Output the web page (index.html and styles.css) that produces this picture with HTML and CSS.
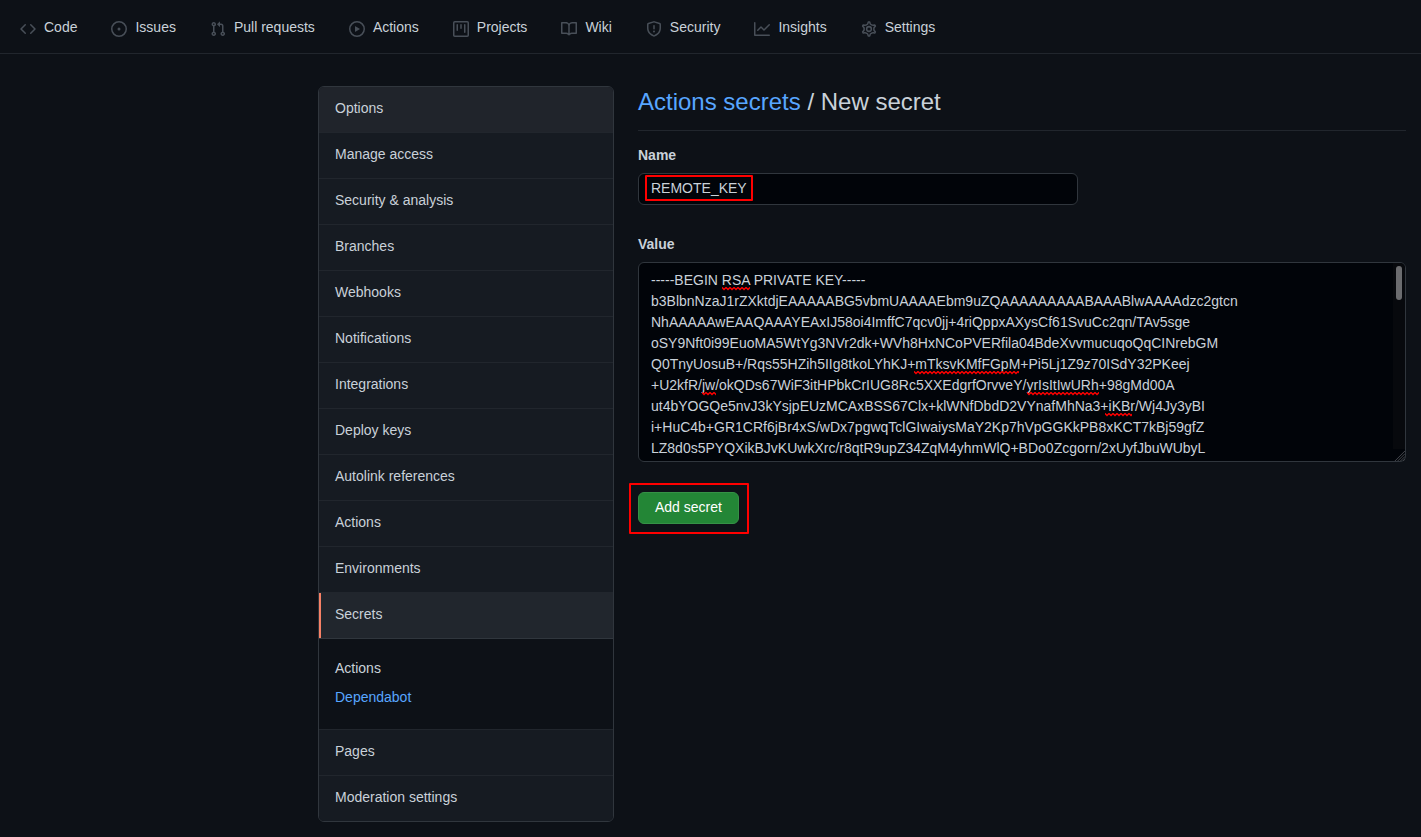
FILE: index.html
```html
<!DOCTYPE html>
<html lang="en">
<head>
<meta charset="utf-8">
<title>New secret</title>
<link rel="stylesheet" href="styles.css">
</head>
<body>
<header class="repo-header">
  <nav class="repo-nav" aria-label="Repository">
    <a class="repo-tab" href="#"><svg class="icon" viewBox="0 0 16 16" aria-hidden="true"><path fill-rule="evenodd" d="M4.72 3.22a.75.75 0 011.06 1.06L2.06 8l3.72 3.72a.75.75 0 11-1.06 1.06L.47 8.53a.75.75 0 010-1.06l4.25-4.25zm6.56 0a.75.75 0 10-1.06 1.06L13.94 8l-3.72 3.72a.75.75 0 101.06 1.06l4.25-4.25a.75.75 0 000-1.06l-4.25-4.25z"/></svg><span>Code</span></a>
    <a class="repo-tab" href="#"><svg class="icon" viewBox="0 0 16 16" aria-hidden="true"><path d="M8 9.5a1.5 1.5 0 100-3 1.5 1.5 0 000 3z"/><path fill-rule="evenodd" d="M8 0a8 8 0 100 16A8 8 0 008 0zM1.5 8a6.5 6.5 0 1113 0 6.5 6.5 0 01-13 0z"/></svg><span>Issues</span></a>
    <a class="repo-tab" href="#"><svg class="icon" viewBox="0 0 16 16" aria-hidden="true"><path fill-rule="evenodd" d="M7.177 3.073L9.573.677A.25.25 0 0110 .854v4.792a.25.25 0 01-.427.177L7.177 3.427a.25.25 0 010-.354zM3.75 2.5a.75.75 0 100 1.5.75.75 0 000-1.5zm-2.25.75a2.25 2.25 0 113 2.122v5.256a2.251 2.251 0 11-1.5 0V5.372A2.25 2.25 0 011.5 3.25zM11 2.5h-1V4h1a1 1 0 011 1v5.628a2.251 2.251 0 101.5 0V5A2.5 2.5 0 0011 2.5zm1 10.25a.75.75 0 111.5 0 .75.75 0 01-1.5 0zM3.75 12a.75.75 0 100 1.5.75.75 0 000-1.5z"/></svg><span>Pull requests</span></a>
    <a class="repo-tab" href="#"><svg class="icon" viewBox="0 0 16 16" aria-hidden="true"><path fill-rule="evenodd" d="M1.5 8a6.5 6.5 0 1113 0 6.5 6.5 0 01-13 0zM8 0a8 8 0 100 16A8 8 0 008 0zM6.379 5.227A.25.25 0 006 5.442v5.117a.25.25 0 00.379.214l4.264-2.559a.25.25 0 000-.428L6.379 5.227z"/></svg><span>Actions</span></a>
    <a class="repo-tab" href="#"><svg class="icon" viewBox="0 0 16 16" aria-hidden="true"><path fill-rule="evenodd" d="M1.75 0A1.75 1.75 0 000 1.75v12.5C0 15.216.784 16 1.75 16h12.5A1.75 1.75 0 0016 14.25V1.75A1.75 1.75 0 0014.25 0H1.75zM1.5 1.75a.25.25 0 01.25-.25h12.5a.25.25 0 01.25.25v12.5a.25.25 0 01-.25.25H1.75a.25.25 0 01-.25-.25V1.75zM11.75 3a.75.75 0 00-.75.75v7.5a.75.75 0 001.5 0v-7.5a.75.75 0 00-.75-.75zm-8.25.75a.75.75 0 011.5 0v5.5a.75.75 0 01-1.5 0v-5.5zM8 3a.75.75 0 00-.75.75v3.5a.75.75 0 001.5 0v-3.5A.75.75 0 008 3z"/></svg><span>Projects</span></a>
    <a class="repo-tab" href="#"><svg class="icon" viewBox="0 0 16 16" aria-hidden="true"><path fill-rule="evenodd" d="M0 1.75A.75.75 0 01.75 1h4.253c1.227 0 2.317.59 3 1.501A3.744 3.744 0 0111.006 1h4.245a.75.75 0 01.75.75v10.5a.75.75 0 01-.75.75h-4.507a2.25 2.25 0 00-1.591.659l-.622.621a.75.75 0 01-1.06 0l-.622-.621A2.25 2.25 0 005.258 13H.75a.75.75 0 01-.75-.75V1.75zm8.755 3a2.25 2.25 0 012.25-2.25H14.5v9h-3.757c-.71 0-1.4.201-1.992.572l.004-7.322zm-1.504 7.324l.004-5.073-.002-2.253A2.25 2.25 0 005.003 2.5H1.5v9h3.757a3.75 3.75 0 011.994.574z"/></svg><span>Wiki</span></a>
    <a class="repo-tab" href="#"><svg class="icon" viewBox="0 0 16 16" aria-hidden="true"><path fill-rule="evenodd" d="M7.467.133a1.75 1.75 0 011.066 0l5.25 1.68A1.75 1.75 0 0115 3.48V7c0 1.566-.32 3.182-1.303 4.682-.983 1.498-2.585 2.813-5.032 3.855a1.7 1.7 0 01-1.33 0c-2.447-1.042-4.049-2.357-5.032-3.855C1.32 10.182 1 8.566 1 7V3.48a1.75 1.75 0 011.217-1.667l5.25-1.68zm.61 1.429a.25.25 0 00-.153 0l-5.25 1.68a.25.25 0 00-.174.238V7c0 1.358.275 2.666 1.057 3.86.784 1.194 2.121 2.34 4.366 3.297a.2.2 0 00.154 0c2.245-.956 3.582-2.104 4.366-3.298C13.225 9.666 13.5 8.36 13.5 7V3.48a.25.25 0 00-.174-.237l-5.25-1.68zM9 10.5a1 1 0 11-2 0 1 1 0 012 0zm-.25-5.75a.75.75 0 10-1.5 0v3a.75.75 0 001.5 0v-3z"/></svg><span>Security</span></a>
    <a class="repo-tab" href="#"><svg class="icon" viewBox="0 0 16 16" aria-hidden="true"><path fill-rule="evenodd" d="M1.5 1.75a.75.75 0 00-1.5 0v12.5c0 .414.336.75.75.75h14.5a.75.75 0 000-1.5H1.5V1.75zm14.28 2.53a.75.75 0 00-1.06-1.06L10 7.94 7.53 5.47a.75.75 0 00-1.06 0L3.22 8.72a.75.75 0 001.06 1.06L7 7.06l2.47 2.47a.75.75 0 001.06 0l5.25-5.25z"/></svg><span>Insights</span></a>
    <a class="repo-tab" href="#"><svg class="icon icon-stroked" viewBox="0.6 0.6 14.8 14.8" aria-hidden="true"><path d="M7.429 1.525a6.593 6.593 0 011.142 0c.036.003.108.036.137.146l.289 1.105c.147.56.55.967.997 1.189.174.086.341.183.501.29.417.278.97.423 1.53.27l1.102-.303c.11-.03.175.016.195.046.219.31.41.641.573.989.014.031.022.11-.059.19l-.815.806c-.411.406-.562.957-.53 1.456a4.588 4.588 0 010 .582c-.032.499.119 1.05.53 1.456l.815.806c.08.08.073.159.059.19a6.494 6.494 0 01-.573.99c-.02.029-.086.074-.195.045l-1.103-.303c-.559-.153-1.112-.008-1.529.27-.16.107-.327.204-.5.29-.449.222-.851.628-.998 1.189l-.289 1.105c-.029.11-.101.143-.137.146a6.613 6.613 0 01-1.142 0c-.036-.003-.108-.037-.137-.146l-.289-1.105c-.147-.56-.55-.967-.997-1.189a4.502 4.502 0 01-.501-.29c-.417-.278-.97-.423-1.53-.27l-1.102.303c-.11.03-.175-.016-.195-.046a6.492 6.492 0 01-.573-.989c-.014-.031-.022-.11.059-.19l.815-.806c.411-.406.562-.957.53-1.456a4.587 4.587 0 010-.582c.032-.499-.119-1.05-.53-1.456l-.815-.806c-.08-.08-.073-.159-.059-.19a6.44 6.44 0 01.573-.99c.02-.029.086-.075.195-.045l1.103.303c.559.153 1.112.008 1.529-.27.16-.107.327-.204.5-.29.449-.222.851-.628.998-1.189l.289-1.105c.029-.11.101-.143.137-.146z"/><circle cx="8" cy="8" r="2.2"/></svg><span>Settings</span></a>
  </nav>
</header>

<div class="layout">
  <nav class="side-menu" aria-label="Settings">
    <a class="side-item is-hovered" href="#">Options</a>
    <a class="side-item" href="#">Manage access</a>
    <a class="side-item" href="#">Security &amp; analysis</a>
    <a class="side-item" href="#">Branches</a>
    <a class="side-item" href="#">Webhooks</a>
    <a class="side-item" href="#">Notifications</a>
    <a class="side-item" href="#">Integrations</a>
    <a class="side-item" href="#">Deploy keys</a>
    <a class="side-item" href="#">Autolink references</a>
    <a class="side-item" href="#">Actions</a>
    <a class="side-item" href="#">Environments</a>
    <a class="side-item is-selected" href="#" aria-current="page">Secrets</a>
    <div class="side-submenu">
      <a class="sub-item is-current" href="#">Actions</a>
      <a class="sub-item" href="#">Dependabot</a>
    </div>
    <a class="side-item" href="#">Pages</a>
    <a class="side-item" href="#">Moderation settings</a>
  </nav>

  <main class="content">
    <h1 class="page-title"><a href="#">Actions secrets</a> / New secret</h1>
    <form class="secret-form">
      <div class="field">
        <label for="secret-name">Name</label>
        <div class="name-box">
          <input class="control" id="secret-name" type="text" value="REMOTE_KEY" spellcheck="false">
          <span class="marker marker-name" aria-hidden="true"></span>
        </div>
      </div>
      <div class="field">
        <label for="secret-value">Value</label>
        <div class="value-box">
          <textarea class="control" id="secret-value" spellcheck="false">-----BEGIN RSA PRIVATE KEY-----
b3BlbnNzaJ1rZXktdjEAAAAABG5vbmUAAAAEbm9uZQAAAAAAAAABAAABlwAAAAdzc2gtcn
NhAAAAAwEAAQAAAYEAxIJ58oi4ImffC7qcv0jj+4riQppxAXysCf61SvuCc2qn/TAv5sge
oSY9Nft0i99EuoMA5WtYg3NVr2dk+WVh8HxNCoPVERfila04BdeXvvmucuqoQqCINrebGM
Q0TnyUosuB+/Rqs55HZih5IIg8tkoLYhKJ+mTksvKMfFGpM+Pi5Lj1Z9z70ISdY32PKeej
+U2kfR/jw/okQDs67WiF3itHPbkCrIUG8Rc5XXEdgrfOrvveY/yrIsItIwURh+98gMd00A
ut4bYOGQe5nvJ3kYsjpEUzMCAxBSS67Clx+klWNfDbdD2VYnafMhNa3+iKBr/Wj4Jy3yBI
i+HuC4b+GR1CRf6jBr4xS/wDx7pgwqTclGIwaiysMaY2Kp7hVpGGKkPB8xKCT7kBj59gfZ
LZ8d0s5PYQXikBJvKUwkXrc/r8qtR9upZ34ZqM4yhmWlQ+BDo0Zcgorn/2xUyfJbuWUbyL</textarea>
          <svg class="spelling" aria-hidden="true">
            <defs><pattern id="wave" width="4" height="4" patternUnits="userSpaceOnUse"><path d="M-1 1.500L0 .500 2 2.500 4 .500 5 1.500" fill="none" stroke="#f00" stroke-width="1.400"/></pattern></defs>
            <g fill="url(#wave)">
              <rect transform="translate(84 25)" width="28" height="4"/>
              <rect transform="translate(276 109)" width="105" height="4"/>
              <rect transform="translate(64 130)" width="14" height="4"/>
              <rect transform="translate(389 130)" width="72" height="4"/>
              <rect transform="translate(467 151)" width="27" height="4"/>
            </g>
          </svg>
          <span class="scroll-track" aria-hidden="true"><span class="scroll-thumb"></span></span>
          <svg class="grip" viewBox="0 0 12 12" aria-hidden="true"><path d="M1 12L12 1M4 12l8-8M7 12l5-5M10 12l2-2"/></svg>
        </div>
      </div>
      <div class="actions">
        <button class="submit" type="button">Add secret</button>
        <span class="marker marker-submit" aria-hidden="true"></span>
      </div>
    </form>
  </main>
</div>
</body>
</html>
```

FILE: styles.css
```css
* { box-sizing: border-box; }

body {
  margin: 0;
  background: #0d1117;
  color: #c9d1d9;
  font: 14px/21px "Liberation Sans", Arial, sans-serif;
}

a { color: inherit; text-decoration: none; }

.repo-header {
  padding: 18px 20px 16px;
  border-bottom: 1px solid #21262d;
}
.repo-nav {
  display: flex;
  gap: 34px;
}
.repo-tab {
  display: flex;
  align-items: flex-end;
  gap: 8px;
  line-height: 19px;
  white-space: nowrap;
}
.icon {
  width: 16px;
  height: 16px;
  flex: none;
  fill: #484f58;
}
.icon-stroked {
  fill: none;
  stroke: #484f58;
  stroke-width: 1.4;
  stroke-linejoin: round;
}

.layout {
  display: flex;
  align-items: flex-start;
  gap: 24px;
  padding: 32px 15px 15px 318px;
}

.side-menu {
  width: 296px;
  flex: none;
  border: 1px solid #30363d;
  border-radius: 6px;
  overflow: hidden;
}
.side-item {
  display: block;
  padding: 11px 16px 13px;
  background: #161b22;
  border-bottom: 1px solid #21262d;
}
.side-item:last-child { border-bottom: 0; }
.side-item.is-hovered { background: #20242b; }
.side-item.is-selected {
  background: #21262d;
  border-bottom-color: #30363d;
  box-shadow: inset 2px 0 #f78166;
}
.side-submenu {
  padding: 15px 16px 17px;
  border-bottom: 1px solid #21262d;
}
.sub-item {
  display: block;
  padding: 4px 0;
  color: #58a6ff;
}
.sub-item.is-current { color: #c9d1d9; }

.content { flex: 1; min-width: 0; }
.page-title {
  margin: 0 0 14px;
  padding-bottom: 12px;
  border-bottom: 1px solid #21262d;
  font-size: 24px;
  line-height: 32px;
  font-weight: 400;
}
.page-title a { color: #58a6ff; }

.field { margin-bottom: 29px; }
.field label {
  display: block;
  margin-bottom: 7px;
  font-weight: 700;
}
.control {
  display: block;
  width: 100%;
  margin: 0;
  background: #010409;
  color: #c9d1d9;
  border: 1px solid #30363d;
  border-radius: 6px;
  outline: 0;
  font: inherit;
}
.name-box,
.value-box,
.actions { position: relative; }
.name-box { max-width: 440px; }
.name-box .control { height: 32px; padding: 4px 12px 6px; }
.value-box .control {
  height: 200px;
  padding: 7px 24px 7px 12px;
  overflow: hidden;
  resize: none;
}
.spelling {
  position: absolute;
  inset: 0;
  width: 100%;
  height: 100%;
  pointer-events: none;
}
.scroll-track {
  position: absolute;
  top: 1px;
  right: 1px;
  bottom: 13px;
  width: 12px;
  padding: 3px;
  background: #07090d;
  border-top-right-radius: 5px;
}
.scroll-thumb {
  display: block;
  height: 34px;
  border-radius: 3px;
  background: #6b6c6f;
}
.grip {
  position: absolute;
  right: 1px;
  bottom: 1px;
  width: 11px;
  height: 11px;
  fill: none;
  stroke: #4a4d52;
}

.actions { margin-top: 30px; width: max-content; }
.submit {
  display: block;
  height: 32px;
  padding: 4px 16px 6px;
  background: #238636;
  color: #fff;
  border: 1px solid #359146;
  border-radius: 6px;
  font: inherit;
}
.marker {
  position: absolute;
  border: 2px solid #f00;
  border-radius: 1px;
  pointer-events: none;
}
.marker-name { left: 7px; top: 2px; width: 108px; height: 26px; }
.marker-submit { inset: -9px -10px -10px -9px; }
```
